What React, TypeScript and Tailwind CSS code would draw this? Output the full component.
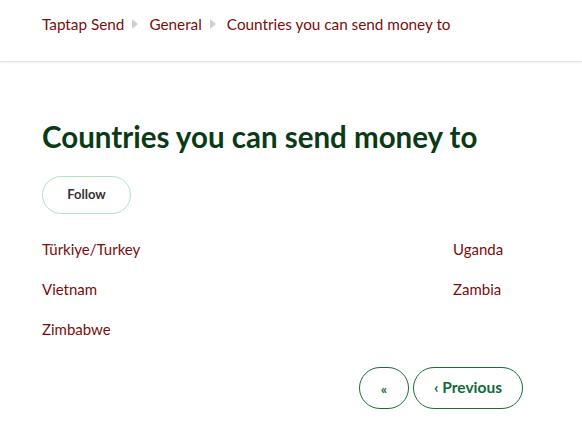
import React from "react";

const crumbs = ["Taptap Send", "General", "Countries you can send money to"];
const countries = ["Türkiye/Turkey", "Uganda", "Vietnam", "Zambia", "Zimbabwe"];

function Caret() {
  return (
    <svg width="6" height="10" viewBox="0 0 6 10" className="ml-[8px] mr-[11px]">
      <path d="M0 0 L6 5 L0 10 Z" fill="#cfcfcf" />
    </svg>
  );
}

export default function App() {
  return (
    <div className="min-h-[443px] bg-white font-['Lato','Noto_Sans',sans-serif]">
      <header className="h-[62px] border-b border-[#e3e3e3] shadow-[0_1px_3px_rgba(0,0,0,0.06)] px-[42px] pt-[13px]">
        <nav className="flex items-center text-[15.3px] text-[#7b0d0d]">
          {crumbs.map((c, i) => (
            <React.Fragment key={c}>
              {i > 0 && <Caret />}
              <span>{c}</span>
            </React.Fragment>
          ))}
        </nav>
      </header>
      <main className="px-[42px]">
        <h1 className="mt-[56px] text-[29.5px] font-bold leading-[38px] text-[#0b3a17]">
          Countries you can send money to
        </h1>
        <button className="mt-[20px] h-[38px] w-[89px] rounded-full border border-[#b5e3c2] text-[13px] font-bold text-[#333]">
          Follow
        </button>
        <ul className="mt-[25px] grid grid-cols-[411px_1fr] gap-y-[20px] text-[15px] leading-[20px] text-[#7b0d0d]">
          {countries.map((c) => (
            <li key={c}>{c}</li>
          ))}
        </ul>
        <div className="mt-[28px] flex justify-end gap-[4px] pr-[17px]">
          <button className="h-[42px] w-[50px] rounded-full border border-[#1d6b3c] text-[14px] font-bold text-[#0e6a3a]">
            «
          </button>
          <button className="h-[42px] w-[110px] rounded-full border border-[#1d6b3c] text-[15.5px] font-bold text-[#0e6a3a]">
            ‹ Previous
          </button>
        </div>
      </main>
    </div>
  );
}
